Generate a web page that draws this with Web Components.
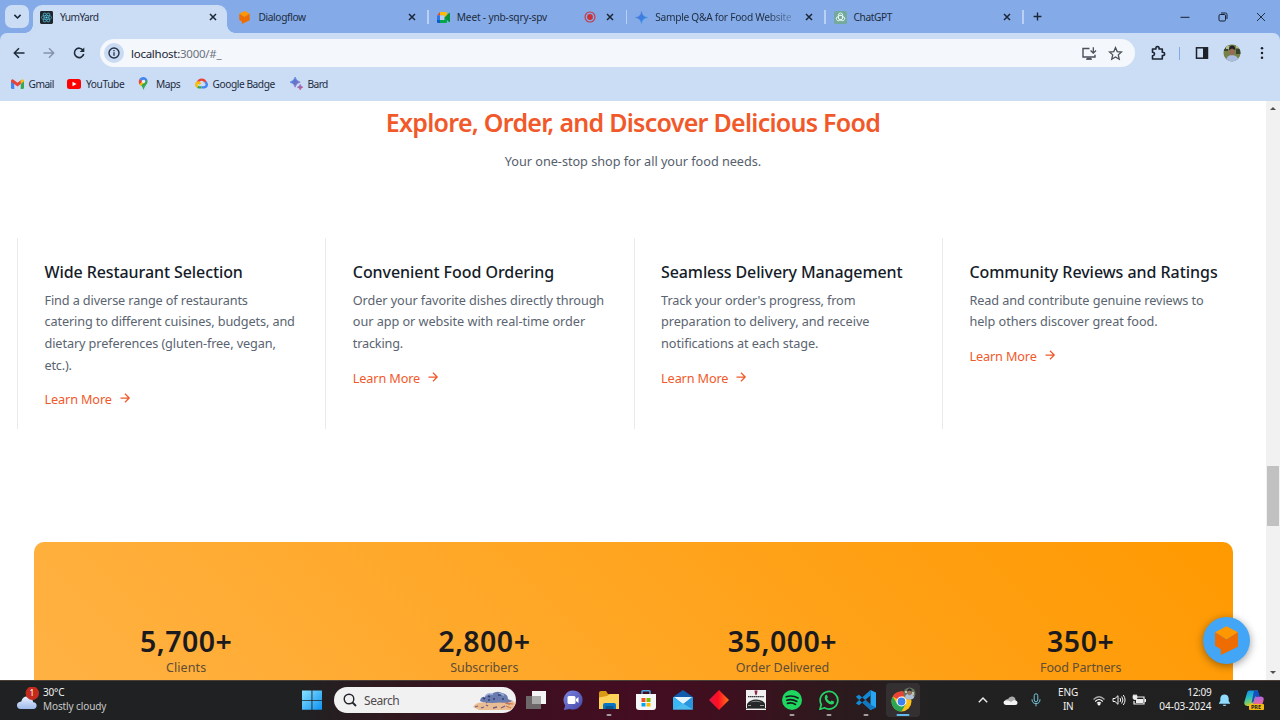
<!DOCTYPE html>
<html lang="en">
<head>
<meta charset="utf-8">
<title>YumYard</title>
<style>
html,body{margin:0;height:100%;overflow:hidden;background:#fff}
body{font-family:"Noto Sans","Open Sans",sans-serif}
</style>
</head>
<body>
<desktop-screen></desktop-screen>
<script>
const define = (name, render, after) => customElements.define(name, class extends HTMLElement {
  connectedCallback() {
    if (this.shadowRoot) return;
    this.attachShadow({ mode: 'open' }).innerHTML = render(this);
    if (after) after(this);
  }
});

/* ---------- icon set ---------- */
const I = {
  chevron: ['0 0 12 12', '<path d="M2.6 4.2 6 7.6l3.4-3.4" fill="none" stroke="#1b2736" stroke-width="1.7"/>'],
  x: ['0 0 12 12', '<path d="m3 3 6 6M9 3 3 9" stroke="#1b2736" stroke-width="1.5"/>'],
  plus: ['0 0 12 12', '<path d="M6 1.7v8.6M1.7 6h8.6" stroke="#1b2736" stroke-width="1.5"/>'],
  react: ['0 0 14 14', '<rect width="14" height="14" rx="1.5" fill="#20252c"/><g fill="none" stroke="#4fb4cc" stroke-width=".8"><ellipse cx="7" cy="7" rx="5.5" ry="2.2"/><ellipse cx="7" cy="7" rx="5.5" ry="2.2" transform="rotate(60 7 7)"/><ellipse cx="7" cy="7" rx="5.5" ry="2.2" transform="rotate(120 7 7)"/></g><circle cx="7" cy="7" r="1.2" fill="#61dafb"/>'],
  dialogflow: ['0 0 24 30', '<path d="M12 0 24 6.5 12 14 0 6.5z" fill="#ff9800"/><path d="M0 6.5 12 14 24 6.5V21.500L6 30v-6L0 20.500z" fill="#ef6c00"/>'],
  meet: ['0 0 26 22', '<path d="M6 0v7H0z" fill="#ea4335"/><path d="M0 7h6v9H0z" fill="#2877ed"/><path d="M0 16h6v6H2q-2 0-2-2z" fill="#0b5bd0"/><path d="M6 0h12q2 0 2 2v6l-5 4V7H6z" fill="#fbbc04"/><path d="M6 7h9v9H6z" fill="#b9cdf0"/><path d="M6 16h9v-5l5 3v6q0 2-2 2H6z" fill="#00a84a"/><path d="m15 11 9-9q2-1 2 1v16q0 2-2 1l-9-9z" fill="#06923e"/>'],
  rec: ['0 0 12 12', '<circle cx="6" cy="6" r="5" fill="none" stroke="#c9353d" stroke-width="1.1"/><circle cx="6" cy="6" r="2.900" fill="#cf3038"/>'],
  spark: ['0 0 14 14', '<defs><linearGradient id="g" x2="1" y2="1"><stop stop-color="#5a75d0"/><stop offset=".55" stop-color="#3c7fe0"/><stop offset="1" stop-color="#39a7ed"/></linearGradient></defs><path d="M7 .5Q7.800 6.200 13.500 7 7.800 7.800 7 13.500 6.200 7.800.5 7 6.200 6.200 7 .5z" fill="url(#g)" stroke="url(#g)" stroke-width=".5"/>'],
  gpt: ['0 0 14 14', '<rect width="14" height="14" rx="2" fill="#74aa9c"/><g fill="none" stroke="#effaf5" stroke-width=".9"><rect x="4.700" y="2.200" width="4.600" height="7.300" rx="2.200"/><rect x="4.700" y="2.200" width="4.600" height="7.300" rx="2.200" transform="rotate(120 7 7)"/><rect x="4.700" y="2.200" width="4.600" height="7.300" rx="2.200" transform="rotate(240 7 7)"/></g>'],
  back: ['0 0 14 14', '<path d="M12.500 7H2.500M7 2.300 2.300 7 7 11.700" fill="none" stroke="#1f2a38" stroke-width="1.5"/>'],
  fwd: ['0 0 14 14', '<path d="M1.500 7h10M7 2.300 11.700 7 7 11.700" fill="none" stroke="#8492a8" stroke-width="1.4"/>'],
  reload: ['0 0 14 14', '<path d="M11 4.200A4.700 4.700 0 1 0 11.700 8" fill="none" stroke="#1f2a38" stroke-width="1.6"/><path d="M12.300 1.500v4.600H7.700z" fill="#1f2a38"/>'],
  info: ['0 0 20 20', '<circle cx="10" cy="10" r="10" fill="#c9daf3"/><circle cx="10" cy="10" r="5" fill="none" stroke="#233047" stroke-width="1.400"/><path d="M10 9.200v3.500M10 7v1.300" stroke="#233047" stroke-width="1.300"/>'],
  install: ['0 0 16 14', '<path d="M8.500 2H2v8.500h12V8.300M5 12.600h6" fill="none" stroke="#4a5058" stroke-width="1.400"/><path d="M6 11.300h4v1.700H6z" fill="#4a5058"/><path d="M12.300.8v5.500M9.600 4l2.700 2.700L15 4" fill="none" stroke="#4a5058" stroke-width="1.300"/>'],
  star: ['0 0 14 14', '<path d="m7 1.500 1.600 3.700 4 .4-3 2.700.9 4L7 10.200 3.500 12.300l.9-4-3-2.700 4-.4z" fill="none" stroke="#4a5058" stroke-width="1.200"/>'],
  puzzle: ['0 0 16 16', '<path d="M2.500 4H6Q5.500 1.600 7.500 1.600T9 4h3.300v3.300q2.300-.3 2.300 1.600T12.300 10.500V14H2.500V10.800q2-.2 2-1.800t-2-1.800z" fill="none" stroke="#1c2531" stroke-width="1.600" stroke-linejoin="round"/>'],
  panel: ['0 0 14 14', '<rect x="1.500" y="1.800" width="11" height="10.400" fill="none" stroke="#1d2027" stroke-width="1.500"/><path d="M8 1.500h4.500v11H8z" fill="#1d2027"/>'],
  avatar: ['0 0 18 18', '<defs><clipPath id="c"><circle cx="9" cy="9" r="8.500"/></clipPath></defs><g clip-path="url(#c)"><path d="M0 0h18v18H0z" fill="#77814a"/><path d="M0 1h5v6H0zM13 5h5v5h-5z" fill="#35432a"/><path d="M3 2h3v3H3zM13 2h4v2h-4z" fill="#b9bd93"/><path d="M3 18q0-7 6-7t7 7z" fill="#a9bce2"/><ellipse cx="9" cy="7.500" rx="2.600" ry="3.800" fill="#976b58"/><path d="M6 6q0-4.500 3.200-4.500T12.200 6L9 4.500z" fill="#222126"/></g>'],
  dots: ['0 0 4 14', '<g fill="#1d2027"><circle cx="2" cy="2.300" r="1.250"/><circle cx="2" cy="7" r="1.250"/><circle cx="2" cy="11.700" r="1.250"/></g>'],
  min: ['0 0 10 10', '<path d="M.5 5.300h9" stroke="#16202e" stroke-width="1"/>'],
  max: ['0 0 10 10', '<rect x="1" y="2.500" width="6.500" height="6.500" rx="1.200" fill="none" stroke="#16202e"/><path d="M3 1h4.500Q9 1 9 2.500V7" fill="none" stroke="#16202e"/>'],
  close: ['0 0 10 10', '<path d="m1 1 8 8M9 1 1 9" stroke="#16202e" stroke-width=".9"/>'],
  gmail: ['0 0 24 18', '<path d="M0 3v13q0 2 2 2h4V7z" fill="#4285f4"/><path d="M18 18h4q2 0 2-2V3l-6 4z" fill="#34a853"/><path d="M18 2v7l6-5V3q-1-4-4-2.500z" fill="#fbbc04"/><path d="M0 3q1-4 4-2.500l8 6 6-4.500v7l-6 4.500L6 9 0 5z" fill="#ea4335"/>'],
  youtube: ['0 0 14 10', '<rect width="14" height="10" rx="2.500" fill="#f00"/><path d="m5.500 2.800 4 2.200-4 2.200z" fill="#fff"/>'],
  maps: ['0 0 16 20', '<path d="M8 20Q7 15 3 11L13 3q3 5-1 9-3 4-4 8z" fill="#34a853"/><path d="M8 0q4 0 6 4L8.500 9 5 4z" fill="#4285f4"/><path d="m2 2.500 5 4.500-5 5q-2.500-5 0-9.500z" fill="#ea4335"/><path d="m2 11 7-7 2 3-7.500 7z" fill="#fbbc04"/><path d="M8 0Q4 0 2 2.700L5.500 6 10 1z" fill="#4285f4"/><circle cx="8" cy="7" r="2.600" fill="#e7f0fc"/>'],
  gcloud: ['0 0 24 19', '<g fill="none" stroke-width="4.500"><path d="M5 8Q7 2.300 12.500 2.300T19 7" stroke="#ea4335"/><path d="M19 7q3 1.500 2.700 5T17 16.700h-5" stroke="#4285f4"/><path d="M12 16.700H7L4.500 15.500" stroke="#34a853"/><path d="M5 15.700Q2 14 2.300 11T7 7.500l3 3" stroke="#fbbc04"/></g>'],
  bard: ['0 0 14 14', '<defs><linearGradient id="b" x2="1" y2="1"><stop stop-color="#3086e0"/><stop offset=".7" stop-color="#8c68bd"/><stop offset="1" stop-color="#e55673"/></linearGradient></defs><path d="M5.500 0Q6.500 4.500 11 5.500 6.500 6.500 5.500 11 4.500 6.500 0 5.500 4.500 4.500 5.500 0zM11 8q.4 2.500 3 3-2.600.5-3 3-.4-2.500-3-3 2.600-.5 3-3z" fill="url(#b)" stroke="url(#b)" stroke-width=".7"/>'],
  arrow: ['0 0 12 12', '<path d="M1.500 6h8.500M6 1.800 10.200 6 6 10.200" fill="none" stroke="#f1592a" stroke-width="1.250"/>'],
  weather: ['0 0 24 24', '<defs><linearGradient id="w" y2="1" x2="0"><stop stop-color="#e8f0ff"/><stop offset="1" stop-color="#9fb9ea"/></linearGradient></defs><path d="M5 23q-4-.5-4-4t4.500-4Q7 9.500 12 10t6 6q3.500.3 3.500 3.500T18 23z" fill="url(#w)"/><circle cx="17" cy="6.500" r="7" fill="#c42b1c"/>'],
  win: ['0 0 20 20', '<defs><linearGradient id="v" gradientUnits="userSpaceOnUse" x2="20" y2="20"><stop stop-color="#8be3ff"/><stop offset="1" stop-color="#0c91f2"/></linearGradient></defs><path d="M0 .5h9.500V10H0zM10.400.5H20V10h-9.600zM0 10.800h9.500v9H0zM10.400 10.800H20v9h-9.600z" fill="url(#v)"/>'],
  search: ['0 0 14 14', '<circle cx="6" cy="6" r="4.800" fill="none" stroke="#22262b" stroke-width="1.400"/><path d="m9.500 9.500 3.500 3.500" stroke="#22262b" stroke-width="1.800"/>'],
  critter: ['0 0 44 20', '<path d="M1 17Q4 12 10 12.500l10-2 20-.5 4 4-5 6H7z" fill="#e9bd91"/><path d="m3 17 3-1M9 18l3-1m2-2 2 1m5 2 4-1m4 1 4-2m1-3 4 1m-24-1 2-2" stroke="#765b84" stroke-width="1.300"/><path d="M8 11Q9 6 13 7 14 2 19 4.500 24 0 30 3q6 1 6 6l4 2q-4 2.500-12 1.500-11 1-15-.5-3 .5-5-1z" fill="#6a7bb0"/><path d="m11 8 2 1m3-3 2 1m3 2 2 0m3-4 3 0m1 4 2 0m-16 1 2 0" stroke="#343e70" stroke-width="1.600" fill="none"/><path d="M14 5.500q3-3 7-1M27 3.500q3 0 5 2" stroke="#a3b4df" stroke-width="1.200" fill="none"/><path d="m33 13 8 1m-7 2 5 2" stroke="#d6774e" stroke-width="1.200"/>'],
  taskview: ['0 0 20 20', '<path d="M6 1h14v13H6z" fill="#f5f5f5"/><path d="M0 6h15v13H0z" fill="#777" fill-opacity=".85"/><path d="M6 6h9v8H6z" fill="#aaa"/>'],
  chat: ['0 0 20 20', '<defs><linearGradient id="h" y2="1" x2="1"><stop stop-color="#7b83df"/><stop offset="1" stop-color="#4548a9"/></linearGradient></defs><path d="M10 .5A9.500 9.500 0 1 1 7 19L.8 20l1.500-4.500A9.500 9.500 0 0 1 10 .5z" fill="url(#h)"/><rect x="4.500" y="6" width="8" height="8" rx="1.500" fill="#fff"/><path d="m13 9 2.500-2v6L13 11z" fill="#fff"/>'],
  folder: ['0 0 20 20', '<path d="M0 3q0-2 2-2h5l2 3h10v4H0z" fill="#d99b13"/><path d="M0 7.500 8 6l3-2h9v15H0z" fill="#ffd35a"/><path d="M4 19v-4q0-2 2-2h9q2 0 2 2v4z" fill="#0874c5"/><path d="M6.500 16h8v3h-8z" fill="#0b548e"/>'],
  store: ['0 0 20 20', '<path d="M6 5V1.800Q6 .7 7.200.7h5.600Q14 .7 14 1.800V5" stroke="#48a2dd" stroke-width="1.500" fill="none"/><path d="M0 4h20v13q0 3-3 3H3q-3 0-3-3z" fill="#f6f6f6"/><path d="M5.500 8h4v4h-4z" fill="#f25022"/><path d="M10.500 8h4v4h-4z" fill="#7fba00"/><path d="M5.500 13h4v3.500h-4z" fill="#00a4ef"/><path d="M10.500 13h4v3.500h-4z" fill="#ffb900"/>'],
  mail: ['0 0 20 20', '<path d="m0 7 10-7 10 7v4H0z" fill="#125cad"/><path d="M0 7h20v12.500H0z" fill="#2995df"/><path d="M1 7h18l-9 7z" fill="#e7f4fb"/><path d="m0 7 10 7L0 19.500z" fill="#37b8f5"/><path d="m0 19.500 10-6 10 6z" fill="#4dbbed"/>'],
  diamond: ['0 0 20 20', '<defs><linearGradient id="d"><stop stop-color="#df1747"/><stop offset=".45" stop-color="#ff0d22"/><stop offset="1" stop-color="#ff751b"/></linearGradient></defs><path d="m10 0 10 10-10 10L0 10z" fill="url(#d)"/>'],
  car: ['0 0 20 20', '<path d="M0 0h20v20H0z" fill="#f1f1f1"/><path d="M8.500.5h3L11 4 10 5.500 9 4z" fill="#8b2949"/><path d="M2 6.700h16" stroke="#34343c" stroke-width="1.300" stroke-dasharray="1.500 .4"/><path d="M1 18v-4q3-4.500 9-4.500t9 4V18z" fill="#242628"/><path d="M4 12.500q6-3.500 12 0l-6-1z" fill="#9da0a2"/><path d="M2 15.500h3M14 15.500h4" stroke="#aaa" stroke-width=".9"/><path d="M0 18h20v1H0z" fill="#777"/>'],
  spotify: ['0 0 20 20', '<circle cx="10" cy="10" r="10" fill="#1ed760"/><path d="M4.200 6.700Q10.500 4.800 16 8M4.800 10.200q5.200-1.600 10 1.200M5.500 13.400q4.200-1.200 8 1" stroke="#171c19" stroke-width="1.700" fill="none" stroke-linecap="round"/>'],
  whatsapp: ['0 0 20 20', '<path d="M1 19.200 2.300 14.500A8.800 8.800 0 1 1 5.500 17.800z" fill="none" stroke="#25d366" stroke-width="1.700"/><path d="M6.600 5q1-.7 1.600.6l.7 1.600-.9 1.300q1.200 2.300 3.500 3.300l1.200-1.200 2.500 1.200q.1 2.500-2.300 2.800-2.800.1-5.500-2.800Q4.500 8 6.600 5z" fill="#25d366"/>'],
  vscode: ['0 0 20 20', '<path d="m14.500 0 5.500 2.500v15L14.500 20V5.500z" fill="#27a4f2"/><path d="M14.500 0v5.500L3 15.200 0 13.500 1 12zM14.500 20v-5.500L3 4.800 0 6.500 1 8z" fill="#138ad6"/><path d="m14.500 14.500 5.500 3L14.500 20 7 12.700 10 10z" fill="#1277c1"/>'],
  chrome: ['0 0 25 25', '<circle cx="10.500" cy="14.500" r="10" fill="#fbc116"/><path d="M10.500 14.500 1.800 9.500A10 10 0 0 1 19.200 9.500h-8.700z" fill="#ea4335"/><path d="M1.800 9.500A10 10 0 0 0 10.500 24.500l4.300-7.500-4.300-2.500-4.300 2.500z" fill="#2da653"/><circle cx="10.500" cy="14.500" r="5" fill="#fff"/><circle cx="10.500" cy="14.500" r="3.900" fill="#3d82ed"/><circle cx="18.500" cy="6.500" r="6" fill="#68745d"/><path d="M14 11q0-4.500 4.500-4.500T23 11q-4 3-9 0z" fill="#aebfd9"/><ellipse cx="18.500" cy="5.500" rx="2" ry="2.800" fill="#9b725b"/><path d="M16.300 4.500q0-3 2.300-3t2.200 3l-2.300-1z" fill="#27252a"/><path d="M14 4h2v2h-2zM21 5h2v3h-2z" fill="#c0c2ad"/>'],
  up: ['0 0 12 12', '<path d="m1.800 8.200 4.200-4.200 4.200 4.200" fill="none" stroke="#eee" stroke-width="1.400"/>'],
  cloud: ['0 0 15 11', '<path d="M1 7.500Q2 4 5 4 6.500 1 9.500 1.500T12.500 5L6 9z" fill="#aaa"/><path d="M3 10q-2.500-.3-2.500-2.500T3.500 5.500Q6 5 8 7l3-2q3.500.5 3.500 2.800T12 10z" fill="#f4f4f4"/>'],
  mic: ['0 0 10 14', '<rect x="3.200" y=".8" width="3.600" height="8" rx="1.800" fill="none" stroke="#75c5dc" stroke-width="1"/><path d="M1 6.300q0 4.300 4 4.300t4-4.300M5 10.600v2.700" fill="none" stroke="#75c5dc" stroke-width="1"/>'],
  wifi: ['0 0 14 12', '<g fill="none" stroke="#f3f3f3" stroke-width="1.200"><path d="M1.500 5.500q5.500-5.500 11 0" opacity=".65"/><path d="M3.200 7.500q3.800-4 7.600 0"/><path d="M5 9.300q2-2 4 0"/></g><circle cx="7" cy="10.300" r="1.200" fill="#fff"/>'],
  volume: ['0 0 14 12', '<path d="M1 4.500h2L6 1.700v8.600L3 7.500H1zM8 4q1.400 2 0 4M9.700 2.500q2.500 3.500 0 7M11.300 1q3.500 5 0 10" fill="none" stroke="#f3f3f3" stroke-width="1"/>'],
  battery: ['0 0 14 12', '<path d="M5 3h7v7H2V7" fill="none" stroke="#eee" stroke-width="1.200"/><path d="M4 5h7v4H4z" fill="#eee"/><path d="M12.500 5H14v3h-1.500z" fill="#eee"/><path d="M1 1.500h4v3Q3 7 1 4.500zM2 0v2M4 0v2" fill="#eee" stroke="#eee" stroke-width=".7"/>'],
  bell: ['0 0 14 14', '<path d="M1 10.500 2.500 8V5.500q.4-4.300 4.500-4.300t4.500 4.300V8l1.500 2.500v.6H1zM5 12h4q-.4 1.500-2 1.500T5 12z" fill="#8fdcff"/>'],
  copilot: ['0 0 20 20', '<defs><linearGradient id="p" x2=".3" y2="1"><stop stop-color="#1685e6"/><stop offset=".5" stop-color="#25bfc3"/><stop offset="1" stop-color="#b9d531"/></linearGradient><linearGradient id="q" x2="0" y2="1"><stop stop-color="#b365ec"/><stop offset="1" stop-color="#ef6c83"/></linearGradient></defs><path d="M5 .5h9L9.500 14Q9 16 6 16H3Q-.5 15.500.5 11.500L3 3Q3.500.5 5 .5z" fill="url(#p)"/><path d="M12 6.500h4.500q4 0 3 4l-1.500 5H8.500L11 8z" fill="url(#q)"/><path d="M10 .5h3q1.500.5 2 3l.7 3H11L9.500 12l-2 1z" fill="#164fc0"/>']
};
const ic = (n, w, h = w) => `<ui-icon name="${n}" style="--w:${w}px;--h:${h}px"></ui-icon>`;
const t = (s, w) => `<fit-text w="${w}">${s}</fit-text>`;

define('desktop-screen', () => `<style>
:host{display:grid;grid-template-rows:101px 579px 40px;width:1280px;height:720px;overflow:hidden}
</style><chrome-frame></chrome-frame><page-view></page-view><task-bar></task-bar>`);

define('ui-icon', el => { const [vb, body] = I[el.getAttribute('name')];
  return `<style>:host{display:block;flex:none;width:var(--w);height:var(--h)}svg{display:block;width:100%;height:100%}</style><svg viewBox="${vb}">${body}</svg>`; });

/* ---------- browser chrome ---------- */
define('chrome-frame', () => `<style>
:host{display:grid;grid-template-rows:33px 68px;background:#84abe8;color:#1e2c40}
.strip{display:flex;align-items:center}
.menu{box-sizing:border-box;width:24px;height:23px;margin:0 4px 0 5px;border-radius:7px;background:#cbdcf5;display:grid;place-items:center}
.plus{margin-left:7.500px}
.win{margin-left:auto;display:flex;gap:28px;padding-right:14px}
.lower{background:#cbdcf5;border-radius:7px 7px 0 0;display:grid;grid-template-rows:40px 28px}
.tools{display:flex;align-items:center}
.nav{display:flex;gap:16px;width:88.500px;padding-left:11.500px}
.omni{display:flex;align-items:center;box-sizing:border-box;width:1035px;height:28px;border-radius:14px;background:#f4f7fc;padding:0 12.500px 0 4px;font-size:11.500px}
.url{margin:0 auto 0 7px;color:#6d737c;white-space:nowrap}.url b{font-weight:400;color:#1b2431}
.end{display:flex;align-items:center;flex:1;padding-left:14.500px}
.sep{width:1px;height:13px;background:#82aae6;margin:0 14.500px 0 13.500px}
.marks{display:flex;align-items:center;padding-left:10.500px;height:21px;font-size:10.200px}
book-mark:nth-child(1){width:56.500px}book-mark:nth-child(2){width:71px}book-mark:nth-child(3){width:56.500px}book-mark:nth-child(4){width:95px}
book-mark:nth-child(3){--gap:7px}
</style>
<div class="strip"><div class="menu">${ic('chevron', 11)}</div>
<browser-tab active icon="react">${t('YumYard', 38)}</browser-tab>
<browser-tab icon="dialogflow">${t('Dialogflow', 47)}</browser-tab>
<browser-tab icon="meet" rec>${t('Meet - ynb-sqry-spv', 90)}</browser-tab>
<browser-tab icon="spark" fade>${t('Sample Q&amp;A for Food Website', 136)}</browser-tab>
<browser-tab icon="gpt">${t('ChatGPT', 38)}</browser-tab>
<div class="plus">${ic('plus', 11)}</div>
<div class="win">${ic('min', 10)}${ic('max', 10)}${ic('close', 10)}</div></div>
<div class="lower"><div class="tools">
<div class="nav">${ic('back', 14)}${ic('fwd', 14)}${ic('reload', 14)}</div>
<div class="omni">${ic('info', 20)}<div class="url">${t('<b>localhost:</b>3000/#_', 90)}</div>${ic('install', 16, 15)}<span style="width:11px"></span>${ic('star', 15)}</div>
<div class="end">${ic('puzzle', 16)}<span class="sep"></span>${ic('panel', 14)}<span style="width:14px"></span>${ic('avatar', 18)}<span style="width:19px"></span>${ic('dots', 4, 14)}</div>
</div><div class="marks">
<book-mark>${ic('gmail', 13, 10)}${t('Gmail', 25)}</book-mark>
<book-mark>${ic('youtube', 14, 10)}${t('YouTube', 38)}</book-mark>
<book-mark>${ic('maps', 11, 13)}${t('Maps', 24)}</book-mark>
<book-mark>${ic('gcloud', 13, 11)}${t('Google Badge', 62)}</book-mark>
<book-mark>${ic('bard', 13)}${t('Bard', 20)}</book-mark>
</div></div>`);

define('book-mark', () => `<style>:host{display:flex;align-items:center;gap:var(--gap,5px)}</style><slot></slot>`);

define('browser-tab', el => { const a = el.hasAttribute('active'); return `<style>
:host{display:flex;align-items:center;flex:none;width:198.400px;height:33px;font-size:10.200px}
.in{display:flex;align-items:center;box-sizing:border-box;width:194.400px;height:28px;margin-top:5px;padding:0 8px 4px 7px;border-radius:9px 9px 0 0;position:relative;${a ? 'background:#cbdcf5' : ''}}
.title{margin:0 auto 0 7px}
.fade{mask-image:linear-gradient(90deg,#000 112px,#0004)}
.line{width:1.500px;height:14px;margin-left:1.500px;background:#b9d0f5}
.in::before,.in::after{content:"";display:${a ? 'block' : 'none'};position:absolute;bottom:0;width:8px;height:8px}
.in::before{left:-8px;background:radial-gradient(circle at 0 0,transparent 7.500px,#cbdcf5 8px)}
.in::after{right:-8px;background:radial-gradient(circle at 100% 0,transparent 7.500px,#cbdcf5 8px)}
</style><div class="in">${ic(el.getAttribute('icon'), 13)}<div class="title ${el.hasAttribute('fade') ? 'fade' : ''}"><slot></slot></div>${el.hasAttribute('rec') ? ic('rec', 12) + '<span style="width:8px"></span>' : ''}${ic('x', 12)}</div>${a ? '' : '<span class="line"></span>'}`; });

/* ---------- page ---------- */
define('page-view', () => `<style>
:host{display:grid;grid-template-columns:1266px 14px;background:#fff;overflow:hidden;position:relative}
main{display:flex;flex-direction:column;min-width:0;overflow:hidden;height:579px}
header{text-align:center;height:137px;flex:none}
h1{margin:4px 0 0;font-size:25px;line-height:34px;font-weight:600;color:#f1592a}
p{margin:11px 0 0;font-size:12.700px;line-height:22px;color:#56606d}
.cards{display:grid;grid-template-columns:repeat(4,308.300px);padding-left:17px;height:191px;margin-bottom:1px;flex:none}
.stats{box-sizing:border-box;display:grid;grid-template-columns:repeat(4,298.200px);margin:112px 33px 0 33.500px;padding:82px 0 0 3.500px;height:216px;flex:none;border-radius:10px;background:linear-gradient(45deg,#ffb347,#ff9900)}
chat-button{position:absolute;left:1203px;top:516px}
</style>
<main><header><h1>${t('Explore, Order, and Discover Delicious Food', 494)}</h1><p>${t('Your one-stop shop for all your food needs.', 256)}</p></header>
<section class="cards">
<feature-card><span slot="title">${t('Wide Restaurant Selection', 198)}</span>${t('Find a diverse range of restaurants', 203)}${t('catering to different cuisines, budgets, and', 250)}${t('dietary preferences (gluten-free, vegan,', 231)}${t('etc.).', 27)}</feature-card>
<feature-card><span slot="title">${t('Convenient Food Ordering', 201)}</span>${t('Order your favorite dishes directly through', 251)}${t('our app or website with real-time order', 232)}${t('tracking.', 50)}</feature-card>
<feature-card><span slot="title">${t('Seamless Delivery Management', 241)}</span>${t("Track your order's progress, from", 194)}${t('preparation to delivery, and receive', 208)}${t('notifications at each stage.', 157)}</feature-card>
<feature-card><span slot="title">${t('Community Reviews and Ratings', 248)}</span>${t('Read and contribute genuine reviews to', 234)}${t('help others discover great food.', 188)}</feature-card>
</section>
<section class="stats">
<stat-item>${t('5,700+', 92)}<span slot="label">${t('Clients', 40)}</span></stat-item>
<stat-item>${t('2,800+', 92)}<span slot="label">${t('Subscribers', 68)}</span></stat-item>
<stat-item>${t('35,000+', 109)}<span slot="label">${t('Order Delivered', 93)}</span></stat-item>
<stat-item>${t('350+', 67)}<span slot="label">${t('Food Partners', 81)}</span></stat-item>
</section></main><scroll-bar></scroll-bar><chat-button></chat-button>`);

define('feature-card', () => `<style>
:host{display:block;box-sizing:border-box;border-left:1px solid #e9eaed;padding:20.500px 0 0 26.500px}
.h{font-size:16px;line-height:26px;font-weight:500;color:#151c29;white-space:nowrap}
.b{display:grid;margin-top:5.200px;grid-auto-rows:21.650px;line-height:21.650px;font-size:12.700px;color:#5a6470}
.l{display:flex;align-items:center;margin-top:12.200px;height:22px;font-size:12.700px;color:#f1592a}
ui-icon{margin:-2px 0 0 7px}
</style><div class="h"><slot name="title"></slot></div><div class="b"><slot></slot></div><div class="l">${t('Learn More', 67)}${ic('arrow', 12)}</div>`);

define('stat-item', () => `<style>
:host{display:block;text-align:center}
.n{font-size:28.500px;line-height:34px;font-weight:600;color:#1b1b1f}
.c{font-size:12.500px;line-height:18px;margin-top:.5px;color:#5e4c35}
</style><div class="n"><slot></slot></div><div class="c"><slot name="label"></slot></div>`);

define('scroll-bar', () => `<style>
:host{display:flex;flex-direction:column;align-items:center;justify-content:space-between;background:#f1f1f1}
i{border:3px solid transparent;border-top:0;border-bottom:3px solid #505050;margin:6px 0}
i.d{border-bottom:0;border-top:3px solid #505050}
b{width:12px;height:60px;background:#c1c1c1;margin:349.500px 0 auto}
</style><i></i><b></b><i class="d"></i>`);

define('chat-button', () => `<style>
:host{display:grid;place-items:center;box-sizing:border-box;width:47px;height:47px;border-radius:50%;background:#42a5f5;box-shadow:0 2px 8px #0006}
</style>${ic('dialogflow', 23, 29)}`);

/* ---------- taskbar ---------- */
define('task-bar', () => `<style>
:host{display:flex;align-items:center;background:linear-gradient(90deg,#202122 0 300px,#30191f 390px,#3d0f20 510px,#440d21 640px,#3d101f 730px,#2c1a1d 840px,#222121 930px,#202020);box-shadow:inset 0 1px #4a4036;color:#f2f2f2;font-size:10px;position:relative}
.weather{display:flex;width:286px;padding-left:16px;align-items:center}
.badge{position:relative;margin-top:-3px}
.badge em{position:absolute;left:9px;top:0;width:14px;text-align:center;font:8.500px/12px "Noto Sans",sans-serif;color:#fff}
.two{display:grid;line-height:13.500px;white-space:nowrap;margin-top:-.5px}
.weather .two{margin-left:4px}.weather .two fit-text+fit-text{color:#c8c8c8}
.search{display:flex;align-items:center;box-sizing:border-box;width:182.500px;height:26px;margin:0 10px 0 11.500px;padding:0 0 0 9px;border-radius:13px;background:#f2f1f2;color:#4e4a4d;font-size:12px;overflow:hidden}
.search fit-text{margin:0 auto 0 7.500px}
.apps{display:flex}
.tray{display:flex;align-items:center;margin-left:auto;padding-right:16.500px}
.tray .r{text-align:right}.tray .c{text-align:center}
.cp{position:relative}
.cp em{position:absolute;left:5px;bottom:0;width:15px;height:6px;background:#f4b913;border-radius:1px;text-align:center;font:700 5.500px/6px "Noto Sans",sans-serif;color:#222}
</style>
<div class="weather"><div class="badge">${ic('weather', 23)}<em>1</em></div><div class="two">${t('30°C', 21)}${t('Mostly cloudy', 63)}</div></div>
${ic('win', 20)}
<div class="search">${ic('search', 14)}${t('Search', 35)}${ic('critter', 44, 20)}</div>
<div class="apps">${['taskview', 'chat', 'folder*', 'store', 'mail', 'diamond', 'car', 'spotify*', 'whatsapp*', 'vscode*', 'chrome!'].map(n => `<task-app icon="${n.replace(/[*!]/, '')}" ${/\*/.test(n) ? 'run' : ''} ${/!/.test(n) ? 'on' : ''}></task-app>`).join('')}</div>
<div class="tray">${ic('up', 12)}<span style="width:14px"></span>${ic('cloud', 15, 11)}<span style="width:13px"></span>${ic('mic', 10, 14)}<span style="width:17px"></span>
<div class="two c">${t('ENG', 20)}${t('IN', 10)}</div><span style="width:14px"></span>${ic('wifi', 14, 12)}<span style="width:6px"></span>${ic('volume', 14, 12)}<span style="width:6px"></span>${ic('battery', 14, 12)}<span style="width:13px"></span>
<div class="two r">${t('12:09', 24)}${t('04-03-2024', 52)}</div><span style="width:6px"></span>${ic('bell', 13, 14)}<span style="width:13px"></span><div class="cp">${ic('copilot', 20)}<em>PRE</em></div></div>`);

define('task-app', el => { const n = el.getAttribute('icon'), on = el.hasAttribute('on'); return `<style>
:host{display:grid;place-items:center;position:relative;box-sizing:border-box;width:${on ? 34 : 20}px;height:34px;margin-right:${n === 'vscode' ? 10 : 16.650}px;border-radius:4px;${on ? 'background:#343032' : ''}}
i{position:absolute;bottom:1px;left:50%;width:${on ? 13 : 5}px;height:2.500px;border-radius:2px;background:${on ? '#62b9ea' : '#a59da0'};transform:translateX(-50%)}
ui-icon{${on ? 'margin:-2px 0 0 1px' : ''}}
</style>${on ? ic(n, 25) : ic(n, 20)}${on || el.hasAttribute('run') ? '<i></i>' : ''}`; });

/* Inline label whose tracking adapts so the text spans the given width. */
define('fit-text', () => `<style>:host{display:inline-block;white-space:nowrap}</style><span><slot></slot></span>`, el => {
  const target = +el.getAttribute('w'), s = el.shadowRoot.querySelector('span');
  const n = el.textContent.length, extra = (target + .3 - s.getBoundingClientRect().width) / n;
  s.style.letterSpacing = extra.toFixed(4) + 'px';
});
</script>
</body>
</html>
